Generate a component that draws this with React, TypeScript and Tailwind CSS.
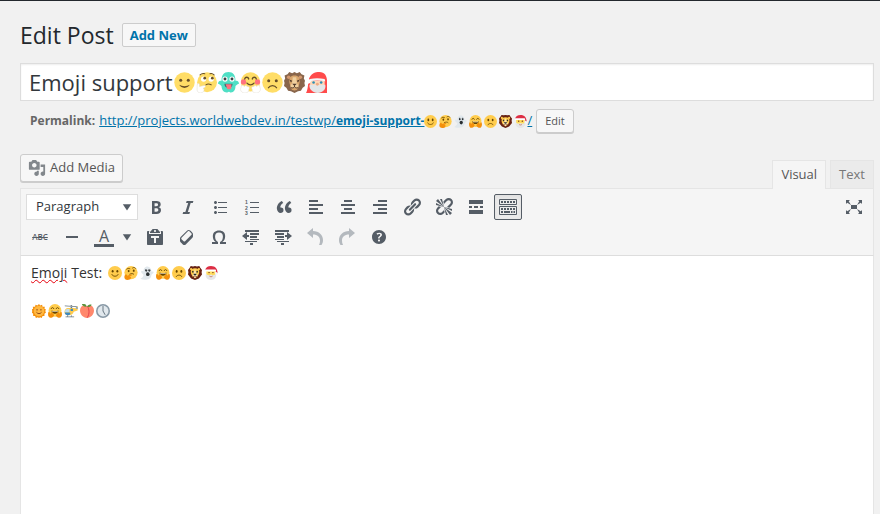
import type { ReactNode } from "react";

type EmojiProps = { className: string };

function Emoji({ label, className, children }: { label: string; className: string; children: ReactNode }) {
  return (
    <svg viewBox="0 0 36 36" role="img" aria-label={label} className={`inline-block shrink-0 ${className}`}>
      {children}
    </svg>
  );
}

/* ---- Flat emoji used in the permalink and the post body ---- */

function Smile({ className }: EmojiProps) {
  return (
    <Emoji label="slightly smiling face" className={className}>
      <circle cx="18" cy="18" r="18" fill="#FFCC4D" />
      <ellipse cx="12" cy="13.5" rx="2.5" ry="3.5" fill="#664500" />
      <ellipse cx="24" cy="13.5" rx="2.5" ry="3.5" fill="#664500" />
      <path d="M10 22c2 6 14 6 16 0" fill="none" stroke="#664500" strokeWidth="2.2" strokeLinecap="round" />
    </Emoji>
  );
}

function Thinking({ className }: EmojiProps) {
  return (
    <Emoji label="thinking face" className={className}>
      <circle cx="18" cy="17" r="17" fill="#FFCC4D" />
      <ellipse cx="12" cy="13" rx="2.4" ry="3" fill="#664500" />
      <ellipse cx="25" cy="12" rx="2.4" ry="3" fill="#664500" />
      <path d="M7 8c2-2.500 6-2 8-1M22 5c3-2.500 7-1 8 1M15 21c4-2 8-2 10 0" fill="none" stroke="#664500" strokeWidth="2.200" strokeLinecap="round" />
      <path d="M4 22c2-1 4 0 4 3l9-3c3-1 4 2 2 3l-5 2c3 0 5 2 4 4-1 4-5 5-9 5-5 0-8-3-8-7 0-3 1-6 3-7z" fill="#F4900C" />
    </Emoji>
  );
}

function Ghost({ className }: EmojiProps) {
  return (
    <Emoji label="ghost" className={className}>
      <path d="M35 17c1-2-2-4-5-2C29 7 25 1 19 1 12 1 9 7 9 14c-3-3-6-2-6 1 0 4 5 5 6 8 0 5-4 7-8 10 9 4 26 4 28-8 0-4 4-4 6-8z" fill="#E1E8ED" />
      <ellipse cx="16" cy="11" rx="2.5" ry="3.5" fill="#292F33" />
      <ellipse cx="24" cy="11" rx="2.500" ry="3.500" fill="#292F33" />
      <ellipse cx="20" cy="21" rx="4.500" ry="5" fill="#292F33" />
      <circle cx="17" cy="9.500" r="1.200" fill="#fff" />
      <circle cx="25" cy="9.500" r="1.200" fill="#fff" />
    </Emoji>
  );
}

function Hug({ className }: EmojiProps) {
  return (
    <Emoji label="hugging face" className={className}>
      <circle cx="18" cy="16.500" r="16.500" fill="#FFCC4D" />
      <path d="M8 12c1-4 6-4 7 0M21 12c1-4 6-4 7 0" fill="none" stroke="#664500" strokeWidth="2.200" strokeLinecap="round" />
      <path d="M9 17c5 2 13 2 18 0 0 5-4 8-9 8s-9-3-9-8z" fill="#664500" />
      <path d="M11 18c4 1 10 1 14 0v2H11z" fill="#fff" />
      <path d="M2 20c2 0 3 3 4 5l3-4c2-1 3 1 2 3 3-1 4 1 3 3 2 0 2 3 0 5-3 4-10 5-12 1-3-4-2-12 0-13zM34 20c-2 0-3 3-4 5l-3-4c-2-1-3 1-2 3-3-1-4 1-3 3-2 0-2 3 0 5 3 4 10 5 12 1 3-4 2-12 0-13z" fill="#F4900C" />
    </Emoji>
  );
}

function Frown({ className }: EmojiProps) {
  return (
    <Emoji label="slightly frowning face" className={className}>
      <circle cx="18" cy="18" r="18" fill="#FFCC4D" />
      <ellipse cx="12" cy="14" rx="2.500" ry="3.500" fill="#664500" />
      <ellipse cx="24" cy="14" rx="2.500" ry="3.500" fill="#664500" />
      <path d="M11 27c2-5 12-5 14 0" fill="none" stroke="#664500" strokeWidth="2.200" strokeLinecap="round" />
    </Emoji>
  );
}

function Lion({ className }: EmojiProps) {
  return (
    <Emoji label="lion face" className={className}>
      <path d="M18 0l5 1 6-1 3 5 4 5-1 6 1 6-4 5-4 5-5 2-5 2-5-2-5-2-4-5-4-5 1-6-1-6 4-5 3-5 6 1z" fill="#662113" />
      <path d="M18 6c7 0 11 3 11 9 0 6-3 8-4 12-1 3-13 3-14 0-1-4-4-6-4-12 0-6 4-9 11-9z" fill="#FFCC4D" />
      <circle cx="8" cy="8" r="3" fill="#FFCC4D" />
      <circle cx="28" cy="8" r="3" fill="#FFCC4D" />
      <path d="M18 8c2 4 2 7 3 11l4 5-7 8-7-8 4-5c1-4 1-7 3-11z" fill="#FFE8B6" />
      <ellipse cx="12.500" cy="15" rx="2" ry="2.500" fill="#272B2B" />
      <ellipse cx="23.500" cy="15" rx="2" ry="2.500" fill="#272B2B" />
      <path d="M14 20h8c1 2-2 4-4 4s-5-2-4-4z" fill="#272B2B" />
      <path d="M11 26c3 2 5 1 7-1 2 2 4 3 7 1" fill="none" stroke="#662113" strokeWidth="1.800" />
    </Emoji>
  );
}

function Santa({ className }: EmojiProps) {
  return (
    <Emoji label="santa claus" className={className}>
      <path d="M6 12h23v12c0 7-23 7-23 0z" fill="#FFDC5D" />
      <path d="M3 11C4 4 10 0 18 0c11 0 17 7 17 19l-6-6H4z" fill="#DD2E44" />
      <path d="M5 20c-3 9 4 16 13 16s15-7 13-16c-3 4-8 5-13 2-5 3-10 2-13-2z" fill="#E6E7E8" />
      <rect x="2" y="9" width="29" height="5" rx="2.500" fill="#fff" />
      <circle cx="33" cy="20" r="3" fill="#F5F8FA" />
      <circle cx="13" cy="17" r="1.800" fill="#662113" />
      <circle cx="23" cy="17" r="1.800" fill="#662113" />
      <path d="M14 26c2 2 6 2 8 0" fill="none" stroke="#C1694F" strokeWidth="2" />
    </Emoji>
  );
}

function Sun({ className }: EmojiProps) {
  return (
    <Emoji label="sun with face" className={className}>
      <path d="M18 0l3 4 5-2 1 5 6 0-1 5 4 2-2 4 2 4-4 3 0 6-5 0-2 5-4-2-3 2-3-2-5 2-2-5-5 0 0-6-4-3 2-4-2-4 4-2-1-5 6 0 1-5 5 2z" fill="#F4900C" />
      <circle cx="18" cy="18" r="13.500" fill="#FFB73F" />
      <circle cx="13" cy="15" r="1.800" fill="#662113" />
      <circle cx="23" cy="15" r="1.800" fill="#662113" />
      <path d="M12 22c3 4 9 4 12 0" fill="none" stroke="#662113" strokeWidth="1.800" strokeLinecap="round" />
    </Emoji>
  );
}

function Helicopter({ className }: EmojiProps) {
  return (
    <Emoji label="helicopter" className={className}>
      <path d="M2 4l31 2v2L2 6zM17 3h4v7h-4z" fill="#66757F" />
      <path d="M10 10h14l8 1 2-5 2 0-1 11-10 3c-1 6-6 9-12 9C6 29 1 26 1 21c0-6 4-11 9-11z" fill="#FFCC4D" />
      <path d="M9 13h5v8H2c0-4 3-8 7-8z" fill="#BBDDF5" />
      <path d="M2 22h12c2 0 3 2 2 4-1 2-3 3-5 3-6 0-9-3-9-7zM17 12h6v6h-6z" fill="#3B88C3" />
      <path d="M4 33h22M9 29v4M19 29v4" fill="none" stroke="#66757F" strokeWidth="2" />
      <circle cx="33" cy="10" r="3" fill="#99AAB5" />
    </Emoji>
  );
}

function Peach({ className }: EmojiProps) {
  return (
    <Emoji label="peach" className={className}>
      <path d="M18 6c9-5 18 0 18 11 0 10-8 19-18 19S0 27 0 17C0 6 9 1 18 6z" fill="#FF886C" />
      <path d="M19 6c5 7 6 18 0 29" fill="none" stroke="#DD2E44" strokeWidth="2" />
      <path d="M17 7C10 8 5 3 5 0c6-1 12 1 12 7zM19 7c0-4 5-7 11-5-1 4-6 7-11 5z" fill="#5C913B" />
    </Emoji>
  );
}

function Clock({ className }: EmojiProps) {
  return (
    <Emoji label="five o'clock" className={className}>
      <circle cx="18" cy="18" r="18" fill="#8899A6" />
      <circle cx="18" cy="18" r="14" fill="#E1E8ED" />
      <path d="M18 6v12l5 9" fill="none" stroke="#66757F" strokeWidth="2.500" strokeLinecap="round" strokeLinejoin="round" />
    </Emoji>
  );
}

/* ---- Softer, larger emoji used in the title field ---- */

function TitleSmile({ className }: EmojiProps) {
  return (
    <Emoji label="slightly smiling face" className={className}>
      <circle cx="18" cy="18" r="17.500" fill="#FFDD67" />
      <circle cx="11.500" cy="14" r="2.600" fill="#664E27" />
      <circle cx="24.500" cy="14" r="2.600" fill="#664E27" />
      <path d="M9 22c3 7 15 7 18 0-5 3-13 3-18 0z" fill="#664E27" />
    </Emoji>
  );
}

function TitleThinking({ className }: EmojiProps) {
  return (
    <Emoji label="thinking face" className={className}>
      <circle cx="19" cy="17.500" r="17" fill="#FFDD67" />
      <circle cx="13" cy="12" r="4.500" fill="#fff" />
      <circle cx="26" cy="12" r="4.500" fill="#fff" />
      <circle cx="15" cy="10.500" r="2.300" fill="#664E27" />
      <circle cx="28" cy="10.500" r="2.300" fill="#664E27" />
      <path d="M7 5c2-2 5-3 8-2M24 3c3-1 5 0 7 2M17 22c3-2 7-1 9 0" fill="none" stroke="#664E27" strokeWidth="1.800" strokeLinecap="round" />
      <path d="M2 22c1-3 4-3 4 0v3l8-2c3 0 3 3 0 4l-2 1c4 1 2 7-4 8-5 0-7-4-6-8z" fill="#fff" stroke="#DDD8CC" strokeWidth=".800" />
    </Emoji>
  );
}

function TitleGhost({ className }: EmojiProps) {
  return (
    <Emoji label="ghost" className={className}>
      <path d="M18 0c8 0 12 5 12 15 4-1 6 2 6 5-2 0-4 2-6 4 0 6-3 12-9 11-2-2-3-1-5 0-5 1-10-4-10-11-2-2-4-4-6-4 0-3 2-6 6-5C6 5 10 0 18 0z" fill="#4FDFC5" />
      <circle cx="12" cy="12" r="4.500" fill="#fff" />
      <circle cx="24" cy="12" r="4.500" fill="#fff" />
      <circle cx="12" cy="12" r="2.500" fill="#3E4347" />
      <circle cx="24" cy="12" r="2.500" fill="#3E4347" />
      <path d="M11 20h14c0 5-3 7-7 7s-7-2-7-7z" fill="#3E6B70" />
      <path d="M13 21h10v5c0 5-8 5-8 0z" fill="#FF717F" />
    </Emoji>
  );
}

function TitleHug({ className }: EmojiProps) {
  return (
    <Emoji label="hugging face" className={className}>
      <circle cx="18" cy="17" r="16.500" fill="#FFDD67" />
      <circle cx="6" cy="17" r="4.500" fill="#FF717F" />
      <circle cx="30" cy="17" r="4.500" fill="#FF717F" />
      <path d="M8 12c1-4 6-4 7 0M21 12c1-4 6-4 7 0M12 19c3 4 9 4 12 0" fill="none" stroke="#664E27" strokeWidth="2.200" strokeLinecap="round" />
      <path d="M2 26c0-4 4-4 5-1 2-3 5-2 5 0 4-1 5 3 3 5 1 4-3 6-7 6-5 0-9-5-6-10zM34 26c0-4-4-4-5-1-2-3-5-2-5 0-4-1-5 3-3 5-1 4 3 6 7 6 5 0 9-5 6-10z" fill="#fff" stroke="#E0DACC" strokeWidth=".800" />
    </Emoji>
  );
}

function TitleFrown({ className }: EmojiProps) {
  return (
    <Emoji label="slightly frowning face" className={className}>
      <circle cx="18" cy="18" r="17.500" fill="#FFDD67" />
      <circle cx="11.500" cy="15" r="2.600" fill="#664E27" />
      <circle cx="24.500" cy="15" r="2.600" fill="#664E27" />
      <path d="M11 27c3-5 11-5 14 0" fill="none" stroke="#664E27" strokeWidth="2.200" strokeLinecap="round" />
    </Emoji>
  );
}

function TitleLion({ className }: EmojiProps) {
  return (
    <Emoji label="lion face" className={className}>
      <path d="M18 0l4 2 5-2 3 4 5 2-1 5 2 4-1 4 1 5-4 3-3 5-5 1-6 3-6-3-5-1-3-5-4-3 1-5-1-4 2-4-1-5 5-2 3-4 5 2z" fill="#89664C" />
      <circle cx="8" cy="9" r="3" fill="#D3976E" />
      <circle cx="28" cy="9" r="3" fill="#D3976E" />
      <path d="M18 6c7 0 9 4 9 9 0 6-2 7-3 13-2 5-10 5-12 0-1-6-3-7-3-13 0-5 2-9 9-9z" fill="#D9A66C" />
      <path d="M15 9h6l1 10 3 5c0 4-14 4-14 0l3-5z" fill="#F0D09E" />
      <path d="M9 13l5 2-2 3zM27 13l-5 2 2 3zM14 20h8l-4 4z" fill="#4C3628" />
      <path d="M18 23v3M12 27c3 1 5 0 6-2 1 2 3 3 6 2" fill="none" stroke="#4C3628" strokeWidth="1.500" />
    </Emoji>
  );
}

function TitleSanta({ className }: EmojiProps) {
  return (
    <Emoji label="santa claus" className={className}>
      <path d="M0 36C4 29 3 20 5 12 8 3 15 0 23 0c9 0 13 7 13 15v21z" fill="#FF4B4B" />
      <path d="M7 15h25v11c-2 9-22 9-25 0z" fill="#FFD8B8" />
      <path d="M6 22c4 0 8 1 13-1 5 2 9 1 14 1 2 8-5 14-13 14S5 30 6 22z" fill="#E3E6E8" />
      <path d="M7 12c8-2 16-2 25 0l1 4c-9-2-18-2-27 0z" fill="#F5F7F8" />
      <circle cx="13" cy="18" r="2.200" fill="#2C8FB5" />
      <circle cx="26" cy="18" r="2.200" fill="#2C8FB5" />
      <circle cx="19.500" cy="21" r="2.500" fill="#EFAA83" />
      <circle cx="4" cy="16" r="4" fill="#fff" />
    </Emoji>
  );
}

/* ---- Toolbar ---- */

function Glyph({ d, className = "size-5" }: { d: string; className?: string }) {
  return (
    <svg viewBox="0 0 20 20" fill="currentColor" aria-hidden="true" className={className}>
      <path d={d} />
    </svg>
  );
}

const icons = {
  media:
    "M13 11V4c0-.55-.45-1-1-1h-1.67L9 1H5L3.67 3H2c-.55 0-1 .45-1 1v7c0 .55.45 1 1 1h10c.55 0 1-.45 1-1zM7 4.5c1.38 0 2.5 1.12 2.5 2.5S8.38 9.5 7 9.5 4.5 8.38 4.5 7 5.62 4.5 7 4.5zM14 6h5v10.5c0 1.38-1.12 2.5-2.5 2.5S14 17.88 14 16.5s1.12-2.5 2.5-2.5c.17 0 .34.02.5.05V9h-3V6zm-4 8.05V13h2v3.5c0 1.38-1.12 2.5-2.5 2.5S7 17.88 7 16.5 8.12 14 9.5 14c.17 0 .34.02.5.05z",
  bold: "M6 4v13h4.54c1.37 0 2.46-.33 3.26-1 .8-.66 1.2-1.58 1.2-2.77 0-.84-.17-1.51-.51-2.01s-.9-.85-1.67-1.03v-.09c.57-.1 1.02-.4 1.36-.9s.51-1.13.51-1.91c0-1.14-.39-1.98-1.17-2.5C12.75 4.26 11.5 4 9.78 4H6zm2.57 5.15V6.26h1.36c.73 0 1.27.11 1.61.32.34.22.51.58.51 1.07 0 .54-.16.92-.47 1.15s-.82.35-1.51.35h-1.5zm0 2.19h1.6c1.44 0 2.16.53 2.16 1.61 0 .6-.17 1.05-.51 1.34s-.86.43-1.57.43H8.57v-3.38z",
  italic: "M14.78 6h-2.13l-2.8 9h2.12l-.62 2H4.6l.62-2h2.14l2.8-9H8.03l.62-2h6.75z",
  bullets:
    "M5.5 7C4.67 7 4 6.33 4 5.5 4 4.68 4.67 4 5.5 4 6.32 4 7 4.68 7 5.5 7 6.33 6.32 7 5.5 7zM8 5h9v1H8V5zm-2.5 7c-.83 0-1.5-.67-1.5-1.5C4 9.68 4.67 9 5.5 9c.82 0 1.5.68 1.5 1.5 0 .83-.68 1.5-1.5 1.5zM8 10h9v1H8v-1zm-2.5 7c-.83 0-1.5-.67-1.5-1.5 0-.82.67-1.5 1.5-1.5.82 0 1.5.68 1.5 1.5 0 .83-.68 1.5-1.5 1.5zM8 15h9v1H8v-1z",
  quote:
    "M9.49 13.22c0-.74-.2-1.38-.61-1.9-.62-.78-1.83-.88-2.53-.72-.29-1.65 1.11-3.75 2.92-4.65L7.88 4c-2.73 1.3-5.42 4.28-4.96 8.05C3.21 14.43 4.59 16 6.54 16c.85 0 1.56-.25 2.12-.75s.83-1.18.83-2.03zm8.05 0c0-.74-.2-1.38-.61-1.9-.63-.78-1.83-.88-2.53-.72-.29-1.65 1.11-3.75 2.92-4.65L15.93 4c-2.73 1.3-5.41 4.28-4.95 8.05.29 2.38 1.66 3.95 3.61 3.95.85 0 1.56-.25 2.12-.75s.83-1.18.83-2.03z",
  left: "M12 5V3H3v2h9zm5 4V7H3v2h14zm-5 4v-2H3v2h9zm5 4v-2H3v2h14z",
  center: "M14 5V3H6v2h8zm3 4V7H3v2h14zm-3 4v-2H6v2h8zm3 4v-2H3v2h14z",
  right: "M17 5V3H8v2h9zm0 4V7H3v2h14zm0 4v-2H8v2h9zm0 4v-2H3v2h14z",
  link: "M17.74 2.76c1.68 1.69 1.68 4.41 0 6.1l-1.53 1.52c-1.12 1.12-2.7 1.47-4.14 1.09l2.62-2.61.76-.77.76-.76c.84-.84.84-2.2 0-3.04-.84-.85-2.2-.85-3.04 0l-.77.76-3.38 3.38c-.37-1.44-.02-3.02 1.1-4.14l1.52-1.53c1.69-1.68 4.42-1.68 6.1 0zM8.59 13.43l5.34-5.34c.42-.42.42-1.1 0-1.52-.44-.43-1.13-.39-1.53 0l-5.33 5.34c-.42.42-.42 1.1 0 1.52.44.43 1.13.39 1.52 0zm-.76 2.29l4.14-4.15c.38 1.44.03 3.02-1.09 4.14l-1.52 1.53c-1.69 1.68-4.41 1.68-6.1 0-1.68-1.68-1.68-4.42 0-6.1l1.53-1.52c1.12-1.12 2.7-1.47 4.14-1.1l-4.14 4.15c-.85.84-.85 2.2 0 3.05.84.84 2.2.84 3.04 0z",
  unlink:
    "M17.74 2.26c1.68 1.69 1.68 4.41 0 6.1l-1.53 1.52c-.32.33-.69.58-1.08.77L13 10l1.69-1.64.76-.77.76-.76c.84-.84.84-2.2 0-3.04-.84-.85-2.2-.85-3.04 0l-.77.76-.76.76L10 7l-.65-2.14c.19-.38.44-.75.77-1.07l1.52-1.53c1.69-1.68 4.42-1.68 6.1 0zM2 4l8 6-6-8zm4-2l4 8-2-8H6zM2 6l8 4-8-2V6zm7.360 7.690L10 13l.740 2.350-1.380 1.390c-1.690 1.680-4.410 1.680-6.100 0-1.680-1.680-1.680-4.420 0-6.100l1.390-1.380L7 10l-.690.640-1.520 1.530c-.850.840-.850 2.200 0 3.040.840.850 2.200.850 3.040 0zM18 16l-8-6 6 8zm-4 2l-4-8 2 8h2zm4-4l-8-4 8 2v2z",
  more: "M17 7V3H3v4h14zM6 11V9H3v2h3zm6 0V9H8v2h4zm5 0V9h-3v2h3zm0 6v-4H3v4h14z",
  expand:
    "M7 8h6v4H7zM2 13v4h4l-1.2-1.200L7 12l-3.800 2.200zM14 17h4v-4l-1.200 1.200L13 12l2.200 3.800zM14 3l1.300 1.300L13 8l3.800-2.200L18 7V3zM6 3H2v4l1.200-1.200L7 8 4.700 4.300z",
  rule: "M4 9h12v2H4z",
  paste:
    "M12.38 2L15 5v1H5V5l2.64-3h4.74zM10 5c.55 0 1-.44 1-1 0-.55-.45-1-1-1s-1 .45-1 1c0 .56.45 1 1 1zm5.45-1H17c.55 0 1 .45 1 1v12c0 .56-.45 1-1 1H3c-.55 0-1-.44-1-1V5c0-.55.45-1 1-1h1.55L4 4.63V7h12V4.63zM14 11V9H6v2h3v5h2v-5h3z",
  eraser:
    "M14.29 4.59l1.1 1.11c.41.4.61.94.61 1.47v2.12c0 .53-.2 1.07-.61 1.47l-6.63 6.63c-.4.41-.94.61-1.47.61s-1.07-.2-1.47-.61l-1.11-1.1-1.1-1.11c-.41-.4-.61-.94-.61-1.47v-2.12c0-.54.2-1.07.61-1.48l6.63-6.62c.4-.41.94-.61 1.47-.61s1.06.2 1.47.61zm-6.21 9.7l6.42-6.42c.39-.39.39-1.03 0-1.43L12.36 4.3c-.19-.19-.45-.29-.72-.29s-.52.1-.71.29l-6.42 6.42c-.39.4-.39 1.04 0 1.43l2.14 2.14c.38.38 1.04.38 1.43 0z",
  omega:
    "M10 5.4c1.27 0 2.24.36 2.91 1.08.66.71 1 1.76 1 3.13 0 1.28-.23 2.37-.69 3.27-.47.89-1.27 1.52-2.22 2.12v2h6v-2h-3.69c.92-.64 1.62-1.34 2.12-2.34.49-1.01.74-2.13.74-3.35 0-1.78-.55-3.19-1.65-4.22S11.92 3.54 10 3.54s-3.43.53-4.52 1.57c-1.1 1.04-1.65 2.44-1.65 4.2 0 1.21.24 2.31.73 3.33.48 1.01 1.19 1.71 2.1 2.36H3v2h6v-2c-.98-.64-1.8-1.28-2.24-2.17-.45-.89-.67-1.96-.67-3.22 0-1.37.33-2.41 1-3.13C7.75 5.76 8.72 5.4 10 5.4z",
  outdent: "M4 3h14v2H4zM9 6h9v2H9zM9 9h7v2H9zM9 12h9v1H9zM4 14h12v1H4zM9 16h3v2H9zM1 9L6 5v3h2v2H6v3z",
  indent: "M2 3h14v2H2zM2 6h9v2H2zM4 9h7v2H4zM2 12h9v1H2zM4 14h12v1H4zM8 16h3v2H8zM19 9l-5-4v3h-2v2h2v3z",
  undo: "M8 1v3c6 0 10 4 10 9 0 2-.5 3.500-1.500 5H14c.8-1.500 1-3 1-4.500C15 10 12.500 7.500 8 7.500V11L2 6z",
  redo: "M12 1v3C6 4 2 8 2 13c0 2 .5 3.500 1.500 5H6c-.8-1.500-1-3-1-4.500C5 10 7.500 7.500 12 7.500V11l6-5z",
  help: "M17 10c0-3.87-3.14-7-7-7-3.87 0-7 3.13-7 7s3.13 7 7 7c3.86 0 7-3.13 7-7zm-6.3 1.48H9.14v-.43c0-.38.08-.7.24-.98s.46-.57.88-.89c.41-.29.68-.53.81-.71.14-.18.2-.39.2-.62 0-.25-.09-.44-.28-.58-.19-.13-.45-.19-.79-.19-.58 0-1.25.19-2 .57l-.64-1.28c.87-.49 1.8-.74 2.77-.74.81 0 1.45.2 1.92.58.48.39.71.91.71 1.55 0 .43-.09.8-.29 1.11-.19.32-.57.67-1.11 1.06-.38.28-.61.49-.71.63-.1.15-.15.34-.15.57v.35zm-1.47 2.74c-.18-.17-.27-.42-.27-.73 0-.33.08-.58.26-.75s.43-.25.77-.25c.32 0 .57.09.75.26s.27.42.27.74c0 .3-.09.55-.27.72-.18.18-.43.27-.75.27-.33 0-.58-.09-.76-.26z",
  caret: "M4 6h12l-6 9z",
};

function NumberedIcon() {
  return (
    <svg viewBox="0 0 20 20" fill="currentColor" aria-hidden="true" className="size-5">
      <path d="M8 5h9v1H8zM8 10h9v1H8zM8 15h9v1H8z" />
      <g fontSize="5" fontWeight="700" fontFamily="Liberation Sans, sans-serif">
        <text x="3" y="7">1</text>
        <text x="3" y="12.500">2</text>
        <text x="3" y="18">3</text>
      </g>
    </svg>
  );
}

function KeyboardIcon() {
  return (
    <svg viewBox="0 0 20 20" fill="none" stroke="currentColor" aria-hidden="true" className="size-5">
      <path d="M1.500 2.500h17v5h-17zM1.500 9.500h17v8h-17z" />
      <path d="M3 5h14" strokeWidth="2" strokeDasharray="2 1" />
      <path d="M3 12h14" strokeWidth="2" strokeDasharray="2 1" />
      <path d="M3 15h2M6 15h6M13 15h1.500M15.500 15H17" strokeWidth="2" />
    </svg>
  );
}

function Tool({ label, active, muted, children }: { label: string; active?: boolean; muted?: boolean; children: ReactNode }) {
  return (
    <button
      type="button"
      aria-label={label}
      title={label}
      className={`flex h-[26px] w-7 shrink-0 items-center justify-center rounded-xs ${
        active ? "border border-[#555d66] bg-[#ebebeb] shadow-inner" : ""
      } ${muted ? "text-[#b4b9be]" : "text-[#555d66]"}`}
    >
      {children}
    </button>
  );
}

const bodyEmoji = [Smile, Thinking, Ghost, Hug, Frown, Lion, Santa];
const titleEmoji = [TitleSmile, TitleThinking, TitleGhost, TitleHug, TitleFrown, TitleLion, TitleSanta];
const secondLine = [Sun, Hug, Helicopter, Peach, Clock];

export default function App() {
  return (
    <div className="flex min-h-screen flex-col border-t border-[#23282d] bg-[#f1f1f1] pr-1.5 pl-5 font-['Open_Sans','Noto_Sans',sans-serif] text-[13px] text-[#444]">
      <header className="flex h-[62px] items-center gap-2 pt-1.5">
        <h1 className="text-[23px] leading-7 text-[#23282d]">Edit Post</h1>
        <a href="#new" className="rounded-xs border border-[#ccc] bg-[#f7f7f7] px-[7px] text-[13px] leading-[22px] font-bold text-[#0073aa]">
          Add New
        </a>
      </header>

      <div className="flex h-[38px] items-center gap-px border border-[#ddd] bg-white px-2 shadow-[inset_0_1px_2px_rgba(0,0,0,0.07)]">
        <input
          aria-label="Post title"
          defaultValue="Emoji support"
          className="field-sizing-content bg-transparent text-[22px] leading-8 text-[#32373c] outline-none"
        />
        {titleEmoji.map((Face, i) => (
          <Face key={i} className="size-[21px]" />
        ))}
      </div>

      <div className="mt-2 flex h-6 items-center pl-2.5">
        <strong className="mr-1 text-[12px] text-[#666]">Permalink:</strong>
        <a href="#permalink" className="flex items-center text-[#0073aa] underline">
          <span>http://projects.worldwebdev.in/testwp/</span>
          <b className="text-[12px]">emoji-support-</b>
          <span className="flex gap-0.5">
            {bodyEmoji.map((Face, i) => (
              <Face key={i} className="size-[13px]" />
            ))}
          </span>
          <span>/</span>
        </a>
        <button type="button" className="ml-1 h-6 rounded-[3px] border border-[#ccc] bg-[#f7f7f7] px-2 text-[11px] text-[#555] shadow-[0_1px_0_#ccc]">
          Edit
        </button>
      </div>

      <div className="mt-[19px] flex h-9 items-start justify-between">
        <button type="button" className="mt-0.5 flex h-7 items-center gap-1 rounded-[3px] border border-[#ccc] bg-[#f7f7f7] px-[7px] text-[#555] shadow-[0_1px_0_#ccc]">
          <Glyph d={icons.media} className="size-[18px] text-[#82878c]" />
          Add Media
        </button>
        <div role="tablist" aria-label="Editor mode" className="z-10 flex gap-1 self-end text-[13px]">
          <button type="button" role="tab" aria-selected="true" className="-mb-px h-[29px] border border-b-0 border-[#e5e5e5] bg-[#f5f5f5] px-2 text-[#555]">
            Visual
          </button>
          <button type="button" role="tab" aria-selected="false" className="h-7 border border-b-0 border-[#e5e5e5] bg-[#ebebeb] px-2 text-[#777]">
            Text
          </button>
        </div>
      </div>

      <div role="toolbar" aria-label="Formatting" className="flex flex-col gap-1 border border-[#e5e5e5] border-b-[#ddd] bg-[#f5f5f5] px-[5px] py-[5px]">
        <div className="flex items-center gap-1">
          <div className="relative h-[26px] w-28 shrink-0">
            <select aria-label="Text style" className="size-full appearance-none border border-[#ddd] bg-white pl-[9px] text-[13px] text-[#32373c]">
              <option>Paragraph</option>
              <option>Heading 1</option>
              <option>Heading 2</option>
            </select>
            <Glyph d={icons.caret} className="pointer-events-none absolute top-1.5 right-1 size-3.5 text-[#555d66]" />
          </div>
          <Tool label="Bold"><Glyph d={icons.bold} /></Tool>
          <Tool label="Italic"><Glyph d={icons.italic} /></Tool>
          <Tool label="Bulleted list"><Glyph d={icons.bullets} /></Tool>
          <Tool label="Numbered list"><NumberedIcon /></Tool>
          <Tool label="Blockquote"><Glyph d={icons.quote} /></Tool>
          <Tool label="Align left"><Glyph d={icons.left} /></Tool>
          <Tool label="Align center"><Glyph d={icons.center} /></Tool>
          <Tool label="Align right"><Glyph d={icons.right} /></Tool>
          <Tool label="Insert link"><Glyph d={icons.link} /></Tool>
          <Tool label="Remove link"><Glyph d={icons.unlink} /></Tool>
          <Tool label="Insert Read More tag"><Glyph d={icons.more} /></Tool>
          <Tool label="Toolbar toggle" active><KeyboardIcon /></Tool>
          <div className="ml-auto">
            <Tool label="Distraction-free writing"><Glyph d={icons.expand} /></Tool>
          </div>
        </div>
        <div className="flex items-center gap-1">
          <Tool label="Strikethrough">
            <span className="text-[8px] leading-3 font-semibold line-through">ABC</span>
          </Tool>
          <Tool label="Horizontal line"><Glyph d={icons.rule} /></Tool>
          <div className="flex w-[47px] shrink-0">
            <Tool label="Text color">
              <span className="w-5 border-b-3 border-[#555d66] text-center text-[16px] leading-4">A</span>
            </Tool>
            <button type="button" aria-label="More text colors" className="flex w-[18px] items-center justify-center text-[#555d66]">
              <Glyph d={icons.caret} className="size-3.5" />
            </button>
          </div>
          <Tool label="Paste as text"><Glyph d={icons.paste} /></Tool>
          <Tool label="Clear formatting"><Glyph d={icons.eraser} /></Tool>
          <Tool label="Special character"><Glyph d={icons.omega} /></Tool>
          <Tool label="Decrease indent"><Glyph d={icons.outdent} /></Tool>
          <Tool label="Increase indent"><Glyph d={icons.indent} /></Tool>
          <Tool label="Undo" muted><Glyph d={icons.undo} /></Tool>
          <Tool label="Redo" muted><Glyph d={icons.redo} /></Tool>
          <Tool label="Keyboard shortcuts"><Glyph d={icons.help} /></Tool>
        </div>
      </div>

      <div
        role="textbox"
        aria-multiline="true"
        aria-label="Post content"
        contentEditable
        suppressContentEditableWarning
        className="flex-1 border-x border-[#e5e5e5] bg-white px-2.5 pt-[7px] text-[14px] leading-[19px] text-[#333] outline-none"
      >
        <p className="mb-[19px] flex items-center">
          <span className="mr-1 underline decoration-red-600 decoration-wavy decoration-1">Emoji</span>
          <span className="mr-1.5">Test:</span>
          <span className="flex gap-0.5">
            {bodyEmoji.map((Face, i) => (
              <Face key={i} className="size-3.5" />
            ))}
          </span>
        </p>
        <p className="flex h-[19px] items-center gap-0.5 pl-px">
          {secondLine.map((Face, i) => (
            <Face key={i} className="size-3.5" />
          ))}
        </p>
      </div>
    </div>
  );
}
